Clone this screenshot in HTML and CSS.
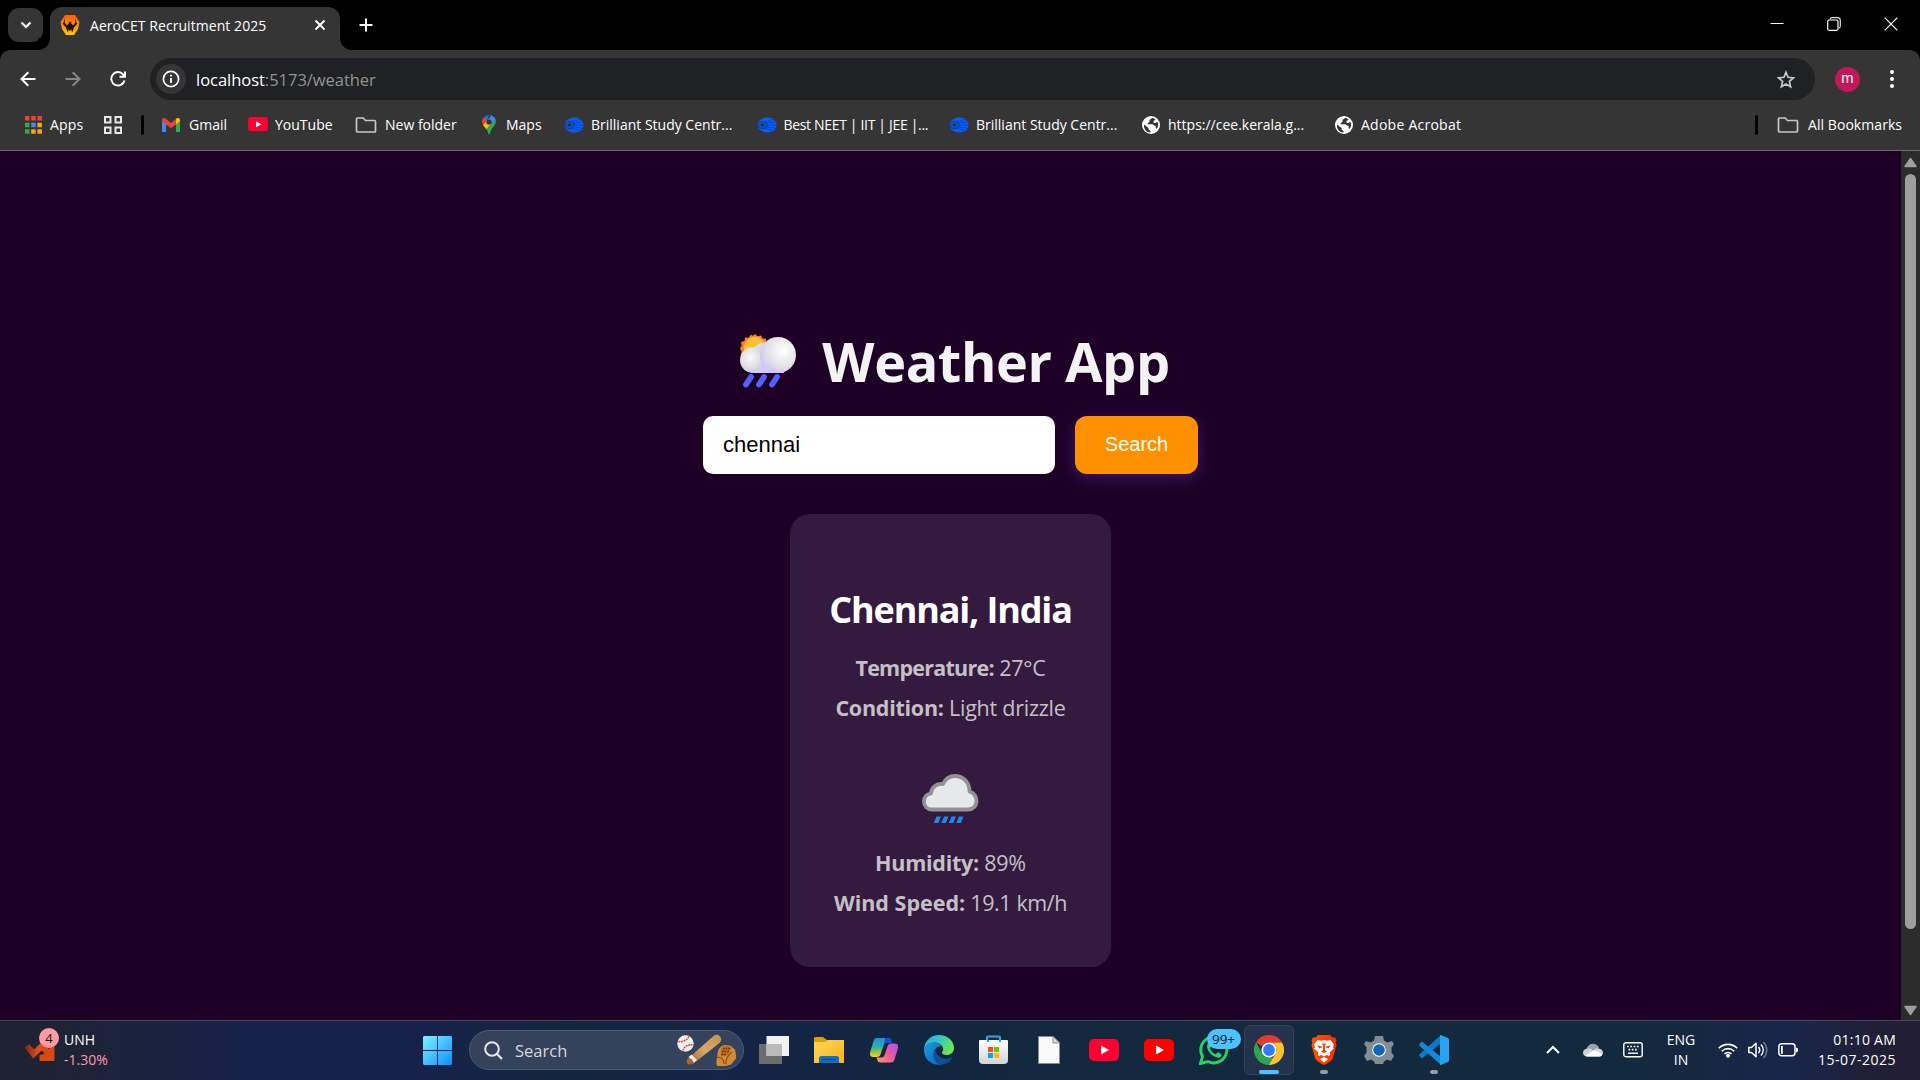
FILE: index.html
```html
<!DOCTYPE html>
<html lang="en">
<head>
<meta charset="utf-8">
<title>AeroCET Recruitment 2025</title>
<link rel="stylesheet" href="styles.css">
</head>
<body>
<svg class="defs" width="0" height="0" aria-hidden="true">
  <defs>
    <linearGradient id="win" x1="0" y1="0" x2="1" y2="1"><stop offset="0" stop-color="#7df3ff"/><stop offset="1" stop-color="#0a8fff"/></linearGradient>
    <linearGradient id="fold" x1="0" y1="0" x2="1" y2="1"><stop offset="0" stop-color="#ffd75e"/><stop offset="1" stop-color="#f7b418"/></linearGradient>
    <linearGradient id="bat" x1="1" y1="0" x2="0" y2="1"><stop offset="0" stop-color="#c98f4d"/><stop offset=".5" stop-color="#dba766"/><stop offset="1" stop-color="#9b5f26"/></linearGradient>
    <linearGradient id="copA" x1="0" y1="0" x2="0" y2="1"><stop offset="0" stop-color="#1e8fe8"/><stop offset=".5" stop-color="#2fb59b"/><stop offset="1" stop-color="#ffd500"/></linearGradient>
    <linearGradient id="copB" x1="1" y1="0" x2="0" y2="1"><stop offset="0" stop-color="#a855f0"/><stop offset=".5" stop-color="#f0559c"/><stop offset="1" stop-color="#ffa05c"/></linearGradient>
    <linearGradient id="edgeA" x1="0" y1="0" x2="1" y2=".5"><stop offset="0" stop-color="#2aa5e8"/><stop offset=".5" stop-color="#36c6c6"/><stop offset="1" stop-color="#6be94a"/></linearGradient>
    <linearGradient id="edgeB" x1="0" y1="0" x2="1" y2="1"><stop offset="0" stop-color="#1b9de2"/><stop offset="1" stop-color="#0b62b5"/></linearGradient>
    <linearGradient id="store" x1="0" y1="0" x2="0" y2="1"><stop offset="0" stop-color="#fff"/><stop offset="1" stop-color="#d4d4d6"/></linearGradient>
    <linearGradient id="aero" x1="0" y1="0" x2="0" y2="1"><stop offset="0" stop-color="#ff5a0a"/><stop offset="1" stop-color="#ffc60a"/></linearGradient>
    <linearGradient id="brave" x1="0" y1="0" x2="1" y2="0"><stop offset="0" stop-color="#ff5500"/><stop offset="1" stop-color="#ff2a00"/></linearGradient>
    <linearGradient id="stock" x1="0" y1="0" x2="1" y2="0"><stop offset="0" stop-color="#8f2a10"/><stop offset=".5" stop-color="#d9531a"/><stop offset="1" stop-color="#d94a0c"/></linearGradient>
    <radialGradient id="puffL" cx=".4" cy=".4" r=".65"><stop offset="0" stop-color="#fafafa"/><stop offset=".6" stop-color="#dedee4"/><stop offset="1" stop-color="#c9bff0"/></radialGradient>
    <radialGradient id="puffR" cx=".65" cy=".38" r=".7"><stop offset="0" stop-color="#fff"/><stop offset=".6" stop-color="#e4e3e8"/><stop offset="1" stop-color="#cfc4f2"/></radialGradient>
    <linearGradient id="puffB" x1="0" y1="0" x2="0" y2="1"><stop offset="0" stop-color="#e4e3e8"/><stop offset="1" stop-color="#cbbdf5"/></linearGradient>
    <symbol id="eye" viewBox="0 0 20 16"><path d="M.5 8C.5 3 6 .5 10.500 .5S19.500 3 19.500 8 15 15.500 10.500 15.500 .5 13 .5 8z" fill="#0b5cf0"/><path d="M8 5 17 1.800M9 6.500 19 4.500M9 8H19.500M9 9.500 19 11.500M8 11 17 14.200" stroke="#0b3fae" stroke-width=".7"/><ellipse cx="5.500" cy="8" rx="4.500" ry="3.500" fill="#1550b8" stroke="#123a80" stroke-width=".8"/><circle cx="5.500" cy="8" r="1.500" fill="#1d2f5c"/></symbol>
    <symbol id="folder" viewBox="0 0 22 18"><path d="M2.500 2h5.700l2.300 2.500h9c.6 0 1 .4 1 1V15c0 .6-.4 1-1 1h-17c-.6 0-1-.4-1-1V3c0-.6.4-1 1-1z" fill="none" stroke="#c7c7c7" stroke-width="1.700"/></symbol>
    <symbol id="globe" viewBox="0 0 18 18"><circle cx="9" cy="9" r="9" fill="#fff"/><path d="M2 8.500 6.500 12v1.500l2 1.500v1.500C4.500 16.500 1.500 13 2 8.500zM10.500 1.800 7.500 4v2L5.700 7v1.300h5l1.500 1.500h1.500v2.500l1 .5c1.500-1.800 2-4.800.5-7.300l-1.500 1.500h-2.200V5l2-1.200c-.8-.9-2-1.600-3-2z" fill="#353535"/></symbol>
    <symbol id="tube" viewBox="0 0 30 22"><rect width="30" height="22" rx="5"/><path d="M12 6.500v9l8-4.500z" fill="#fff"/></symbol>
  </defs>
</svg>

<header class="tabstrip">
  <button class="tab-list"><svg width="12" height="8" viewBox="0 0 12 8"><path d="m1.500 1.500 4.500 4.500L10.500 1.500" fill="none" stroke="#fff" stroke-width="2.200"/></svg></button>
  <div class="tab">
    <svg width="20" height="20" viewBox="0 0 20 20"><path d="M5 0h10l4.500 7L18 14l-4 6H6l-4-6L.5 7z" fill="url(#aero)"/><path d="M5 3 3.500 7.500l3 5.500L9.200 15.500h1.600L13.500 13l3-5.500L15 3l.3 4.500-2.300 3-2-2.500.5-2L10 7.500 8.500 6l.5 2-2 2.500-2.300-3z" fill="#20140a"/><path d="m3 8 3.500 4L8 16.500M17 8l-3.500 4-1.500 4.500" fill="none" stroke="#20140a" stroke-width="1.200"/></svg>
    <span class="tab-title">AeroCET Recruitment 2025</span>
    <svg width="12" height="12" viewBox="0 0 12 12"><path d="m1.500 1.500 9 9m0-9-9 9" stroke="#fff" stroke-width="1.900"/></svg>
  </div>
  <svg class="new-tab" width="14" height="14" viewBox="0 0 14 14"><path d="M7 .5v13M.5 7h13" stroke="#fff" stroke-width="2"/></svg>
  <div class="window-controls">
    <svg width="14" height="14" viewBox="0 0 14 14"><path d="M.5 6.500h13" stroke="#fff"/></svg>
    <svg width="14" height="14" viewBox="0 0 14 14"><rect x=".7" y="3" width="10.300" height="10.300" rx="1.500" fill="none" stroke="#fff" stroke-width="1.200"/><path d="M3 2.500C3.200 1 4 .7 5 .7h5.500c2 0 2.800.9 2.800 2.800V9c0 1-.4 1.800-1.500 2" fill="none" stroke="#ddd" stroke-width="1.200"/></svg>
    <svg width="14" height="14" viewBox="0 0 14 14"><path d="m.7.700 12.600 12.600m0-12.600L.7 13.300" stroke="#fff" stroke-width="1.200"/></svg>
  </div>
</header>

<div class="toolbar">
  <nav class="nav">
    <svg width="16" height="16" viewBox="0 0 16 16"><path d="M15.500 8H1.800M8.300 1.200 1.500 8l6.800 6.800" fill="none" stroke="#fff" stroke-width="2"/></svg>
    <svg width="16" height="16" viewBox="0 0 16 16"><path d="M.5 8h13.700M7.700 1.200 14.500 8l-6.800 6.800" fill="none" stroke="#868686" stroke-width="2"/></svg>
    <svg width="16" height="16" viewBox="0 0 16 16"><path d="M14.500 9.500A6.700 6.700 0 1 1 13 3.300l1.500 1.700M15 .5v5.300H9.500" fill="none" stroke="#fff" stroke-width="2"/></svg>
  </nav>
  <div class="address">
    <span class="site-info"><svg width="18" height="18" viewBox="0 0 18 18"><circle cx="9" cy="9" r="7.600" fill="none" stroke="#fff" stroke-width="1.700"/><path d="M9 8v5M9 4.700v1.800" stroke="#fff" stroke-width="1.800"/></svg></span>
    <span class="url">localhost<span class="url-path">:5173/weather</span></span>
    <svg class="star" width="20" height="19" viewBox="0 0 20 19"><path d="m10 2.300 2.100 5 5.400.5-4.100 3.600 1.200 5.300L10 13.900l-4.600 2.800 1.200-5.300-4.100-3.600 5.400-.5z" fill="none" stroke="#c7c7c7" stroke-width="1.700"/></svg>
  </div>
  <span class="avatar">m</span>
  <svg class="kebab" width="6" height="20" viewBox="0 0 6 20"><g fill="#fff"><circle cx="3" cy="3" r="2"/><circle cx="3" cy="10" r="2"/><circle cx="3" cy="17" r="2"/></g></svg>
</div>

<div class="bookmarks">
  <a class="bm apps"><svg width="17" height="18" viewBox="0 0 17 18"><path d="M0 0h4.500v4.500H0zM6.200 0h4.500v4.500H6.200zM12.400 0h4.500v4.500h-4.500z" fill="#ee4438"/><path d="M0 6.700h4.500v4.500H0zM0 13.200h4.500v4.500H0z" fill="#35a552"/><path d="M6.200 6.700h4.500v4.500H6.200z" fill="#3d8cf5"/><path d="M12.400 6.700h4.500v4.500h-4.500zM6.200 13.200h4.500v4.500H6.200zM12.400 13.200h4.500v4.500h-4.500z" fill="#f6a70f"/></svg><span>Apps</span></a>
  <a class="bm grid"><svg width="18" height="18" viewBox="0 0 18 18"><g fill="none" stroke="#e8e8e8" stroke-width="2"><path d="M1 1h5.500v5.500H1zM11.500 1H17v5.500h-5.500zM1 11.500h5.500V17H1zM11.500 11.500H17V17h-5.500z"/></g></svg></a>
  <i class="bm-sep"></i>
  <a class="bm gmail"><svg width="18" height="14" viewBox="0 0 19 14" preserveAspectRatio="none"><path d="M0 2v11c0 .6.400 1 1 1h3.300V5z" fill="#4285f4"/><path d="M19 2v11c0 .6-.4 1-1 1h-3.300V5z" fill="#34a853"/><path d="M14.700 1v5.500L19 3.200V2c0-2-2.400-2.600-3.700-1.500z" fill="#fbbc04"/><path d="M0 2v1.200l9.500 7L14.700 6.500V1L9.500 4.900 3.700.5C2.300-.5 0 0 0 2z" fill="#ea4335"/></svg><span>Gmail</span></a>
  <a class="bm youtube"><svg width="20" height="14.500" fill="#ff0033"><use href="#tube"/></svg><span>YouTube</span></a>
  <a class="bm newfolder"><svg width="22" height="18"><use href="#folder"/></svg><span>New folder</span></a>
  <a class="bm maps"><svg width="14" height="20" viewBox="0 0 14 20"><path d="M7 0a7 7 0 0 0-5.400 2.500L5 5.500z" fill="#1a73e8"/><path d="M1.600 2.500C-.5 5 0 8 1 10l4.200-4.800z" fill="#ea4335"/><path d="M7 0c3 0 5.700 2 6.600 4.500L8.500 10 5 5.500 9 1z" fill="#4285f4"/><path d="m1 10 4-4.500 3.700 4-4.200 5C3.500 12.800 1.800 12 1 10z" fill="#fbbc04"/><path d="M13.600 4.500C15 10 9.500 12 8 18c-.3 1.800-1.300 2-1.800 0-.3-1.300-.8-2.400-1.700-3.500z" fill="#34a853"/><circle cx="7" cy="7" r="2.600" fill="#2b3440"/></svg><span>Maps</span></a>
  <a class="bm bril"><svg width="20" height="16"><use href="#eye"/></svg><span>Brilliant Study Centr...</span></a>
  <a class="bm neet"><svg width="20" height="16"><use href="#eye"/></svg><span>Best NEET | IIT | JEE |...</span></a>
  <a class="bm bril2"><svg width="20" height="16"><use href="#eye"/></svg><span>Brilliant Study Centr...</span></a>
  <a class="bm cee"><svg width="18" height="18"><use href="#globe"/></svg><span>https://cee.kerala.g...</span></a>
  <a class="bm adobe"><svg width="18" height="18"><use href="#globe"/></svg><span>Adobe Acrobat</span></a>
  <i class="bm-sep end"></i>
  <a class="bm all"><svg width="22" height="18"><use href="#folder"/></svg><span>All Bookmarks</span></a>
</div>

<div class="viewport">
  <main class="app">
    <h1 class="title">
      <svg width="56" height="54" viewBox="0 0 56 54">
        <path d="m15 0 2.500 2.300L21 1.500l1.500 3 3.500.3.300 3.700L29 11l-2 3 1.500 3.500-3 2-.5 3.500-3.500.2-10 1L4 24l-3.300-3 1-3.500L0 14.500l1.700-3L1 8l3.500-1 .5-3.500 3.700.3L10.800.8 13 1.800z" fill="#f98327"/>
        <circle cx="15" cy="14" r="11" fill="#fbc02d"/>
        <path d="M12 25h32v14H12z" fill="url(#puffB)"/>
        <circle cx="22" cy="18" r="9" fill="#dcdce0"/>
        <circle cx="13" cy="26" r="13" fill="url(#puffL)"/>
        <circle cx="38" cy="21" r="18" fill="url(#puffR)"/>
        <path d="M14 36c8-6 18-5 27 3H13z" fill="#d4caf4" opacity=".7"/>
        <path d="m11 43-5 7.500m18-7.500-5 7.500m18-7.500-5 7.500" stroke="#5560ff" stroke-width="5.800" stroke-linecap="round"/>
      </svg>
      <span>Weather App</span>
    </h1>
    <form class="search">
      <input class="city" type="text" value="chennai">
      <button class="go" type="button">Search</button>
    </form>
    <section class="card">
      <h2 class="place">Chennai, India</h2>
      <p class="fact f1"><strong>Temperature:</strong> 27°C</p>
      <p class="fact f2"><strong>Condition:</strong> Light drizzle</p>
      <svg class="condition" width="80" height="80" viewBox="0 0 80 80">
        <path d="M21 51.500c-5 0-8-3.500-8-8 0-4.300 2.800-7.500 7-8.200C20.500 29 26 25.300 32 26c2.600-5.500 7-8 12-8 8 0 14.500 6 14.500 15.500 4 1.500 7 5 7 9.500 0 5-3.700 8.500-8.500 8.500z" fill="#e7e8eb" stroke="#929394" stroke-width="3.800" stroke-linejoin="round"/>
        <path d="M25.500 58.500h4.500l-2.700 6.500h-4.500zM33 58.500h4.500L34.800 65h-4.500zM40.500 58.500H45L42.300 65h-4.500zM48 58.500h4.500L49.800 65h-4.500z" fill="#1e88e5"/>
      </svg>
      <p class="fact f3"><strong>Humidity:</strong> 89%</p>
      <p class="fact f4"><strong>Wind Speed:</strong> 19.1 km/h</p>
    </section>
  </main>
  <aside class="scrollbar">
    <svg width="13" height="11" viewBox="0 0 13 11"><path d="M6.500 1.500 12 9.500H1z" fill="#9f9f9f" stroke="#9f9f9f" stroke-width="1.500" stroke-linejoin="round"/></svg>
    <i class="thumb"></i>
    <svg width="13" height="11" viewBox="0 0 13 11"><path d="M6.500 9.500 12 1.500H1z" fill="#9f9f9f" stroke="#9f9f9f" stroke-width="1.500" stroke-linejoin="round"/></svg>
  </aside>
</div>

<footer class="taskbar">
  <div class="widget">
    <div class="stock">
      <svg width="30" height="18" viewBox="0 0 30 18"><path d="m2 3 6.500 8L17 3l7 8" fill="none" stroke="url(#stock)" stroke-width="6"/><path d="M14.500 17.500V12l4.500-1 7-7.500 3.500-1V17q0 1-1 1H15.500q-1 0-1-.5z" fill="#d94a0c"/></svg>
      <b class="count">4</b>
    </div>
    <div class="ticker"><span>UNH</span><span class="down">-1.30%</span></div>
  </div>
  <svg class="start" width="29" height="29" viewBox="0 0 29 29"><path d="M1 0h13v14H0V1zM15 0h13l1 1v13H15zM0 15h14v14H1l-1-1zM15 15h14v13l-1 1H15z" fill="url(#win)"/></svg>
  <div class="tb-search">
    <svg width="19" height="19" viewBox="0 0 19 19"><circle cx="8" cy="8" r="6.800" fill="none" stroke="#e4e6ea" stroke-width="2"/><path d="m13 13 5 5" stroke="#e4e6ea" stroke-width="2.300"/></svg>
    <span>Search</span>
    <svg class="ball" width="60" height="32" viewBox="0 0 60 32">
      <circle cx="8.500" cy="9.500" r="8.200" fill="#eef0f4"/>
      <path d="M1.500 7.500c5 .5 9-1.500 10.500-5.500M6 16.500c1.500-4.500 5-6.300 10.500-5.500" fill="none" stroke="#e5432a" stroke-width="1.600" stroke-dasharray="1.800 .8"/>
      <path d="M10 25.500 36.500 2c2-1.700 4.500-1.500 6.500.5s1.300 4.500-.5 6.500L16 30z" fill="url(#bat)"/>
      <path d="m14.500 20.500 5.500 5.500-3 2.500-5.500-5.500z" fill="#f1ede6"/>
      <circle cx="12.700" cy="27.500" r="3" fill="#a9672b"/>
      <path d="M41 17c1-3 4-6 7-6l5 .5 5 4c.5 3 1.500 6 1 9l-5 6-5 1.500H41q-2-1-1.700-4z" fill="#d18a35"/>
      <path d="M46 12.500c4-2 8 0 8 2l-3.500 7-6.500 1c-1-4 0-8 2-10z" fill="#b86d20"/>
      <path d="M40 23c4 0 7 2 7 7M49 30c-1-4 2-9 6-12" fill="none" stroke="#8a4c12" stroke-width="1.100"/>
      <path d="M46 14.500h7M45 17.500h7M44.500 20.500h5" stroke="#5f320a" stroke-width="1.500" stroke-dasharray="1.500 1.200"/>
    </svg>
  </div>
  <div class="pins">
    <span class="pin"><svg width="30" height="28" viewBox="0 0 30 28"><path d="M0 8h23v20H0z" fill="#6b6c6e"/><path d="M7.500 0H30v20H7.500z" fill="#f1f1f2"/><path d="M7.500 8H23v12H7.500z" fill="#b9babb"/></svg></span>
    <span class="pin"><svg width="30" height="26" viewBox="0 0 30 26"><path d="M0 1.500Q0 0 1.500 0H9l4 3h17v5H0z" fill="#dd9c0a"/><path d="M0 5h11l3-2h16v23H0z" fill="url(#fold)"/><path d="M5 26v-4.500Q5 19 7.500 19h15q2.500 0 2.500 2.500V26z" fill="#0f6fc5"/><path d="M8 22.500h14" stroke="#0a4a8a" stroke-width="1.300"/></svg></span>
    <span class="pin"><svg width="28" height="26" viewBox="0 0 28 26"><path d="M7 1h11c2.500 0 3 2 3.800 4.500h-5c-2.300 0-3 1.500-3.600 3.700L11 16c-.8 2.500-1.500 4-4.500 4H3C-.5 20-.5 17 .5 14L3.500 4C4.200 2 5 1 7 1z" fill="url(#copA)"/><path d="M15 1h3c2.500 0 3 2 3.800 5H17c-1.800 0-2.700 1-3.300 3z" fill="#1a4bd0"/><path d="M21 25.500H10.500c-2.500 0-3.200-2-4-5h4.800c2.300 0 3-1.500 3.700-3.700L17.300 10c.7-2.400 1.700-3.500 4.200-3.500H25c3.500 0 3.500 3 2.500 6l-3 10c-.6 2-1.500 3-3.500 3z" fill="url(#copB)"/></svg></span>
    <span class="pin"><svg width="30" height="30" viewBox="0 0 30 30"><path d="M0 15C0 6 7 0 15 0c9 0 15 6.500 15 13 0 4.500-3.500 7-7.500 7-3 0-4.500-1.300-4.500-2.300 0-.8 1.200-1.500 1.200-3.700C19 10 15 7.500 10.500 7.500 5 7.500 1 11 0 15z" fill="url(#edgeA)"/><path d="M0 15c.5-4.500 4.500-7.500 10-7.500 3.500 0 7 1.500 8.500 4C13 10.500 9.500 15 10 19.500c.5 5 4 9 8 10C8 31.500 0 24.500 0 15z" fill="url(#edgeB)"/><path d="M11.500 14c-4 5-2.500 12 4 15.500 5 .8 10-2 12.300-6.200.3-.6-.2-1-.8-.7C20.500 25.800 12 22.500 11.500 14z" fill="#0f4f96"/></svg></span>
    <span class="pin store"><svg width="29" height="30" viewBox="0 0 29 30"><path d="M8 8V2.500Q8 1.500 9 1.500h11q1 0 1 1V8" fill="none" stroke="#29a9e8" stroke-width="2.200"/><path d="M0 6Q0 5 1 5h27q1 0 1 1v19q0 4-4 4H4q-4 0-4-4z" fill="url(#store)"/><path d="M8 5h2v2H8zM20 5h2v2h-2z" fill="#29a9e8"/><path d="M9 12h5v5H9z" fill="#f25022"/><path d="M15 12h5v5h-5z" fill="#7fba00"/><path d="M9 18h5v5H9z" fill="#00a4ef"/><path d="M15 18h5v5h-5z" fill="#ffb900"/></svg></span>
    <span class="pin"><svg width="22" height="28" viewBox="0 0 22 28"><path d="M.5.5h14.500l6.500 6.500v20.500H.5z" fill="#f9f9f9" stroke="#8b8b8b"/><path d="M15 .5V7h6.500z" fill="#ddd" stroke="#8b8b8b"/></svg></span>
    <span class="pin"><svg width="30" height="22" fill="#ff0033"><use href="#tube"/></svg></span>
    <span class="pin"><svg width="30" height="22" fill="#ff0000"><use href="#tube"/></svg></span>
    <span class="pin"><svg width="30" height="30" viewBox="0 0 30 30"><path d="m1.500 28.500 2-7.200A13 13 0 1 1 9 26.500z" fill="none" stroke="#25d366" stroke-width="2.900"/><path d="M10 8c-1.500.5-2.500 2.500-2 4.500 1.500 5 5 8.500 10 10 2 .5 4-.5 4.500-2.200.2-1-.2-1.500-3.500-2.800-1.500 0-1.500 2-2.500 1.700C13.500 18 12 16 11 13.800c-.3-1 1.200-1.500 1.200-2.500C11 8 10.800 7.700 10 8z" fill="#25d366"/></svg><b class="unread">99+</b></span>
    <span class="pin active"><svg width="30" height="30" viewBox="0 0 30 30"><path d="M2 7.500A15 15 0 0 1 28 7.500H15a7.500 7.500 0 0 0-6.500 3.750z" fill="#e33b2e"/><path d="M2 7.500 8.500 18.750A7.500 7.500 0 0 0 15 22.500h6.500L15 30A15 15 0 0 1 2 7.500z" fill="#2da44f"/><path d="M28 7.500A15 15 0 0 1 15 30l6.500-11.250A7.500 7.500 0 0 0 15 7.500z" fill="#fdc12f"/><circle cx="15" cy="15" r="7.600" fill="#fff"/><circle cx="15" cy="15" r="5.900" fill="#2f7df2"/></svg></span>
    <span class="pin running"><svg width="26" height="30" viewBox="0 0 26 30"><path d="M7 0h12l2.500 2.500L24 2.200l1.500 3.300-.8 2 .8 2.500-3.500 13c-.8 2.500-5 5-9 7-4-2-8.200-4.500-9-7L.5 10l.8-2.500-.8-2L2 2.200l2.500.3z" fill="url(#brave)"/><path d="m13 5 3 .8 3.500-.8 3.500 4.500-1 2.500.7 1.500-4 4 .5 2-1.200 1.500-2.500-1L13 21.500 10.500 20 8 21l-1.200-1.500.5-2-4-4L4 12 3 9.500 6.500 5l3.500.8z" fill="#fff"/><path d="m13 22 4 2-4 3.500L9 24z" fill="#fff"/><path d="m6 10.500 5 1v1l-2.500 1zM20 10.500l-5 1v1l2.500 1zM10.500 8.500h5L14 10v5l2 1.200-3 2-3-2 2-1.200v-5z" fill="#f4431a"/></svg></span>
    <span class="pin"><svg width="30" height="28" viewBox="0 0 30 28"><path d="M11 0h8l1 4.500 3.500 2L28 5l2 3-2.500 3.500v5L30 20l-3 5-4-1.500-3 2-1 2.500h-8l-1-2.500-3-2L3 25l-3-5 2.500-3.500v-5L0 8l2-3 4.500 1.500 3.500-2z" fill="#838b95"/><circle cx="15" cy="14" r="6.800" fill="#fff"/><circle cx="15" cy="14" r="5.800" fill="#0f67b8"/></svg></span>
    <span class="pin running"><svg width="30" height="30" viewBox="0 0 30 30"><path d="M22 0v8L3.500 23c-.6.500-1.200.3-1.700-.2L.5 21c-.5-.6-.5-1.200 0-1.700z" fill="#0a7acc"/><path d="M22 30v-8L3.500 7c-.6-.5-1.200-.3-1.700.2L.5 9c-.5.600-.5 1.200 0 1.700z" fill="#1588d4"/><path d="m21 .3.8-.3 7 3c.8.400 1.200 1 1.200 2v20c0 1-.4 1.600-1.200 2l-7 3-.8-.3z" fill="#27a3f2"/></svg></span>
  </div>
  <div class="tray">
    <svg class="t-up" width="14" height="9" viewBox="0 0 14 9"><path d="m1 8 6-6 6 6" fill="none" stroke="#fff" stroke-width="2"/></svg>
    <svg class="t-cloud" width="20" height="14" viewBox="0 0 20 14"><path d="M3 7C4 4 6 .8 10 .8c3.500 0 5.500 2.200 6.300 5z" fill="#9aa3ad"/><path d="M4.500 13.500C1.500 13.500 0 12 0 9.700 0 7 2.500 5.500 5 5.800c2-.8 4 0 5 1 3-1.700 5-1.500 6.300-1 2.200.2 3.700 1.700 3.700 4 0 2-1.500 3.700-4 3.700z" fill="#d0d4d8"/><path d="m2 12.800 9-5.300c3 0 6 2 8 4.500-.7 1-1.700 1.500-3 1.500H4.500c-1 0-1.800-.2-2.500-.7z" fill="#fff"/></svg>
    <svg class="t-keys" width="20" height="16" viewBox="0 0 20 16"><rect x=".8" y=".8" width="18.400" height="13.900" rx="2" fill="none" stroke="#fff" stroke-width="1.400"/><path d="M4 4.500h13M5.500 7.700h10" stroke="#fff" stroke-width="1.700" stroke-dasharray="1.700 1.600"/><path d="M5 11.200h10" stroke="#fff" stroke-width="1.400"/></svg>
    <div class="lang"><span>ENG</span><span>IN</span></div>
    <svg class="t-wifi" width="20" height="16" viewBox="0 0 20 16"><g fill="none" stroke="#fff" stroke-width="1.600"><path d="M.8 6.200a13 13 0 0 1 18.400 0M3.800 9.200a8.800 8.800 0 0 1 12.400 0M6.500 12a5 5 0 0 1 7 0"/></g><circle cx="10" cy="13.700" r="2" fill="#fff"/></svg>
    <svg class="t-vol" width="20" height="18" viewBox="0 0 20 18"><path d="M.8 6.500h2.700L8 2.300v13.400l-4.500-4.200H.8z" fill="none" stroke="#fff" stroke-width="1.500" stroke-linejoin="round"/><path d="M10.500 6c1.500 1.800 1.500 4.200 0 6M13 3.500c2.800 3.300 2.800 7.700 0 11" fill="none" stroke="#fff" stroke-width="1.500"/><path d="M15.500 1c4.300 4.500 4.300 11.500 0 16" fill="none" stroke="#68798a" stroke-width="1.500"/></svg>
    <svg class="t-bat" width="20" height="14" viewBox="0 0 20 14"><rect x=".8" y=".8" width="16.200" height="12" rx="3" fill="none" stroke="#fff" stroke-width="1.500"/><path d="M3 3h1.800v7.800H3zM18 4.500l2 1v3l-2 1z" fill="#fff"/></svg>
    <div class="clock"><span>01:10 AM</span><span class="date">15-07-2025</span></div>
  </div>
</footer>
</body>
</html>
```
FILE: styles.css
```css
* { box-sizing: border-box; }
body {
  margin: 0;
  width: 1920px;
  height: 1080px;
  overflow: hidden;
  display: flex;
  flex-direction: column;
  background: #000;
  color: #fff;
  font-family: "Open Sans", "Noto Sans", sans-serif;
  font-size: 14px;
}
svg { display: block; flex: none; }
.defs { position: absolute; }
button, input { border: 0; padding: 0; margin: 0; }

/* Tab strip */
.tabstrip { height: 50px; display: flex; align-items: flex-start; }
.tab-list {
  width: 35px;
  height: 34px;
  margin: 8px 7px 0 8px;
  border-radius: 11px;
  background: #353535;
  display: grid;
  place-items: center;
}
.tab {
  position: relative;
  width: 290px;
  height: 43px;
  margin-top: 7px;
  padding: 0 13px 7px 10px;
  border-radius: 12px 12px 0 0;
  background: #353535;
  display: flex;
  align-items: center;
}
.tab::before, .tab::after {
  content: "";
  position: absolute;
  bottom: 0;
  width: 12px;
  height: 12px;
}
.tab::before { left: -12px; background: radial-gradient(circle at 0 0, #000 11.500px, #353535 12.500px); }
.tab::after { right: -12px; background: radial-gradient(circle at 100% 0, #000 11.500px, #353535 12.500px); }
.tab-title { width: 234px; padding-left: 10px; letter-spacing: .06px; white-space: nowrap; }
.new-tab { margin: 18px 0 0 19px; }
.window-controls { margin: 17px 22px 0 auto; display: flex; gap: 43px; }

/* Toolbar */
.toolbar {
  height: 56px;
  padding: 8px 0 6px;
  border-radius: 10px 10px 0 0;
  background: #353535;
  display: flex;
  align-items: center;
}
.nav { width: 150px; padding-left: 20px; display: flex; gap: 29px; }
.address {
  width: 1665px;
  height: 42px;
  padding: 0 19px 0 6px;
  border-radius: 21px;
  background: #202124;
  display: flex;
  align-items: center;
}
.site-info {
  width: 30px;
  height: 30px;
  border-radius: 50%;
  background: #353535;
  display: grid;
  place-items: center;
}
.url { margin-left: 10px; font-size: 16.500px; letter-spacing: -.03px; }
.url-path { color: #939393; }
.star { margin-left: auto; }
.avatar {
  width: 25px;
  height: 25px;
  margin-left: 20px;
  border-radius: 50%;
  background: #c2185b;
  font: 14px/23px Roboto, sans-serif;
  text-align: center;
}
.kebab { margin-left: 29px; }

/* Bookmarks bar */
.bookmarks {
  height: 45px;
  padding: 0 18px 7px 25px;
  border-bottom: 1px solid #6a6a6a;
  background: #353535;
  display: flex;
  align-items: center;
}
.bm { display: flex; align-items: center; gap: 7px; white-space: nowrap; flex: none; }
.apps { width: 79px; gap: 8px; letter-spacing: .15px; }
.grid { width: 37px; }
.bm-sep { width: 3px; height: 20px; border-radius: 1.500px; background: #000; }
.gmail { width: 86px; margin-left: 18px; gap: 9px; }
.youtube { width: 107px; }
.newfolder { width: 127px; gap: 8px; }
.maps { width: 82px; gap: 10px; }
.bril, .neet { width: 192.500px; }
.neet { letter-spacing: -.33px; }
.bril2 { width: 193px; }
.cee { width: 193px; gap: 8px; }
.adobe { gap: 8px; letter-spacing: .25px; }
.bm-sep.end { margin-left: auto; margin-right: 19px; }
.all { width: 125px; gap: 9px; letter-spacing: .06px; }

/* Page */
.viewport { height: 869px; display: flex; background: #1e0027; }
.app { flex: 1; padding-top: 170px; display: flex; flex-direction: column; align-items: center; }
.title {
  height: 80px;
  margin: 0 0 15px;
  padding-left: 9px;
  display: flex;
  align-items: center;
  gap: 26px;
  color: #f3f3f3;
  font-size: 54px;
  line-height: 80px;
  letter-spacing: -.4px;
  white-space: nowrap;
}
.search { display: flex; gap: 20px; margin: 0 0 40px; }
.city, .go { height: 58px; font-family: "Liberation Sans", Arial, sans-serif; }
.city { width: 352px; padding: 0 20px; border-radius: 10px; background: #fff; color: #000; font-size: 22px; }
.go {
  width: 123px;
  padding-bottom: 2px;
  border-radius: 12px;
  background: #ff9100;
  color: #fff;
  font-size: 20px;
  box-shadow: 0 4px 15px rgba(98, 54, 200, .4);
}
.card {
  width: 321px;
  height: 453px;
  padding: 71px 0 44px;
  border-radius: 20px;
  background: #341a3f;
  display: flex;
  flex-direction: column;
  align-items: center;
  white-space: nowrap;
}
.place { height: 50px; margin: 0 0 13px; font-size: 36px; line-height: 50px; letter-spacing: -1.150px; }
.fact { height: 40px; margin: 0; color: #c4c0c6; font-size: 21.500px; line-height: 40px; letter-spacing: -.25px; }
.f1 strong { letter-spacing: -.75px; }
.f4 { letter-spacing: -.4px; }
.f4 strong { letter-spacing: 0; }
.condition { margin: 30px 0 5px; }
.scrollbar {
  width: 19px;
  padding: 6px 0 4px;
  background: #2c2c2c;
  display: flex;
  flex-direction: column;
  align-items: center;
}
.thumb { width: 11px; height: 755px; margin: 6px 0 auto; border-radius: 6px; background: #9f9f9f; }

/* Taskbar */
.taskbar {
  height: 60px;
  padding-bottom: 1px;
  border-top: 1px solid #4a4a5a;
  background: linear-gradient(90deg, #202232 0, #1e2335 60px, #17224a 240px, #17224a 420px, #13263f 560px, #152447 720px, #13263f 920px, #13293e 1300px, #13293e 1640px, #17264a 1790px, #211f38 1870px, #211e32 1920px);
  display: flex;
  align-items: center;
}
.widget { width: 423px; padding: 0 0 1px 25px; display: flex; align-items: center; }
.stock { position: relative; width: 39px; padding-top: 4px; }
.count {
  position: absolute;
  left: 14px;
  top: -11px;
  width: 20px;
  height: 20px;
  border-radius: 50%;
  background: #ff99a4;
  color: #111;
  font-size: 13px;
  font-weight: 400;
  line-height: 20px;
  text-align: center;
}
.ticker, .lang, .clock { display: flex; flex-direction: column; line-height: 20px; white-space: nowrap; }
.down { color: #ff99a4; }
.tb-search {
  width: 275px;
  height: 40px;
  margin-left: 17px;
  padding: 0 6px 0 14px;
  border: 1px solid #4d5a73;
  border-radius: 20px;
  background: #35425c;
  color: #d5d8de;
  font-size: 16.500px;
  display: flex;
  align-items: center;
  gap: 12px;
}
.ball { margin-left: auto; }
.pins { margin-left: 2.500px; display: flex; }
.pin { position: relative; width: 55px; height: 50px; display: grid; place-items: center; }
.store { padding-right: 1px; }
.active::before {
  content: "";
  position: absolute;
  inset: 0 2.500px;
  border: 1px solid #344158;
  border-radius: 6px;
  background: #24334b;
}
.active svg { position: relative; }
.active::after, .running::after {
  content: "";
  position: absolute;
  bottom: 1px;
  left: 23.500px;
  width: 8px;
  height: 4px;
  border-radius: 2px;
  background: #969ca6;
}
.active::after { left: 17.500px; width: 20px; background: #4cc2ff; }
.unread {
  position: absolute;
  left: 20px;
  top: 4px;
  width: 34px;
  height: 20px;
  border-radius: 10px;
  background: #4cc2ff;
  color: #0c1a26;
  font-size: 13.500px;
  font-weight: 400;
  line-height: 20px;
  text-align: center;
}
.tray { margin-left: auto; margin-right: 24px; padding-bottom: 1px; display: flex; align-items: center; }
.t-cloud { margin-left: 23px; }
.t-keys { margin-left: 20px; }
.lang { width: 28px; margin: 0 23px 0 24px; align-items: center; }
.t-vol { margin: 0 10px; }
.clock { width: 98px; align-items: flex-end; letter-spacing: .25px; }
.date { letter-spacing: .5px; }
```
